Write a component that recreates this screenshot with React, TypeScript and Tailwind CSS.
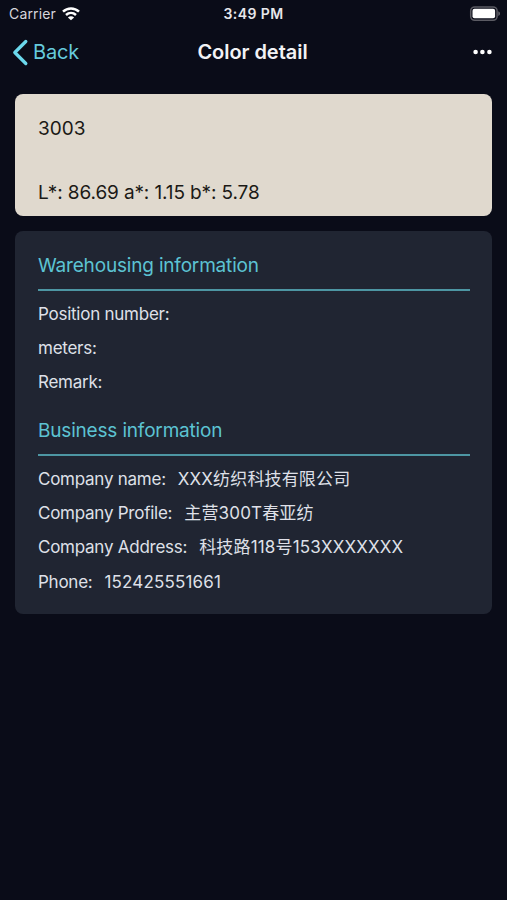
import { ReactNode } from "react";

function StatusBar() {
  return (
    <div className="grid h-7 grid-cols-3 items-center pl-[9px] pr-[6px] text-[14px] leading-7">
      <div className="flex items-center gap-[6px]">
        <span className="tracking-[0.15px] text-[#d6d6dc]">Carrier</span>
        <svg width="18" height="14" viewBox="0 0 18 14" fill="none" stroke="#fff" strokeWidth="2.5">
          <path d="M1 4.6C5.5 .3 12.5 .3 17 4.600" />
          <path d="M4 8c2.900-2.700 7.100-2.700 10 0" />
          <path d="M9 13.300 5.900 10.400c1.700-1.600 4.500-1.600 6.200 0Z" fill="#fff" stroke="none" />
        </svg>
      </div>
      <div className="-ml-[3px] text-center font-semibold tracking-[0.4px] text-[#e6e6eb]">3:49 PM</div>
      <div className="flex justify-end">
        <svg width="32" height="16" viewBox="0 0 32 16" fill="none">
          <rect x="1.700" y="0.900" width="26.400" height="13.400" rx="4" stroke="#5b5b63" strokeWidth="1.500" />
          <rect x="3.500" y="2.800" width="22.600" height="9.400" rx="2" fill="#fff" />
          <path d="M29.300 5.300c2.200.8 2.200 3.800 0 4.600Z" fill="#6b6b72" />
        </svg>
      </div>
    </div>
  );
}

function NavBar() {
  return (
    <div className="grid h-12 grid-cols-[1fr_auto_1fr] items-center pl-3 pr-[14px]">
      <div className="flex items-center gap-1 text-[#66cbdc]">
        <svg width="17" height="27" viewBox="0 0 17 27" fill="none" stroke="#6bd8ec" strokeWidth="3.300" strokeLinecap="round" strokeLinejoin="round">
          <path d="M13.800 2.500 2.800 13.500 13.800 24.500" />
        </svg>
        <span className="text-[20px] tracking-[-0.200px]">Back</span>
      </div>
      <h1 className="text-[20px] font-semibold tracking-[-0.050px] text-[#f2f2f5]">Color detail</h1>
      <div className="flex justify-end">
        <svg width="20" height="6" viewBox="0 0 20 6" fill="#fff">
          <circle cx="2.600" cy="3" r="2.300" />
          <circle cx="9.400" cy="3" r="2.300" />
          <circle cx="16.400" cy="3" r="2.300" />
        </svg>
      </div>
    </div>
  );
}

function Heading({ children }: { children: ReactNode }) {
  return (
    <h2 className="-mr-px h-[37px] border-b-2 border-[#4d96a3] text-[19px] leading-[24px] tracking-[-0.180px] text-[#5cc3d3]">
      {children}
    </h2>
  );
}

function Row({ label, value }: { label: string; value?: string }) {
  return (
    <div className="flex h-[34.2px] items-center gap-3 text-[17px] leading-[34px] text-[#dfe0e8]">
      <span className="tracking-[-0.250px]">{label}</span>
      {value && <span className="tracking-[0.160px]">{value}</span>}
    </div>
  );
}

export default function App() {
  return (
    <div className="h-[900px] w-[507px] overflow-hidden bg-[#0a0c18] font-['Inter','Noto_Sans_CJK_SC',sans-serif]">
      <StatusBar />
      <NavBar />
      <main className="flex flex-col gap-[15px] px-[15px] pt-[18px]">
        <section className="flex h-[122px] flex-col justify-between rounded-lg bg-[#e0d9ce] px-[23px] pb-[11px] pt-[23px] text-[19px] leading-6 text-[#1b1916]">
          <div>3003</div>
          <div className="tracking-[-0.120px]">L*: 86.69 a*: 1.15 b*: 5.78</div>
        </section>
        <section className="h-[383px] rounded-lg bg-[#202532] px-[23px] pt-[23px]">
          <Heading>Warehousing information</Heading>
          <div className="h-[128px] pt-[6px]">
            <Row label="Position number:" />
            <Row label="meters:" />
            <Row label="Remark:" />
          </div>
          <Heading>Business information</Heading>
          <div className="pt-[6px]">
            <Row label="Company name:" value="XXX纺织科技有限公司" />
            <Row label="Company Profile:" value="主营300T春亚纺" />
            <Row label="Company Address:" value="科技路118号153XXXXXXX" />
            <Row label="Phone:" value="152425551661" />
          </div>
        </section>
      </main>
    </div>
  );
}
